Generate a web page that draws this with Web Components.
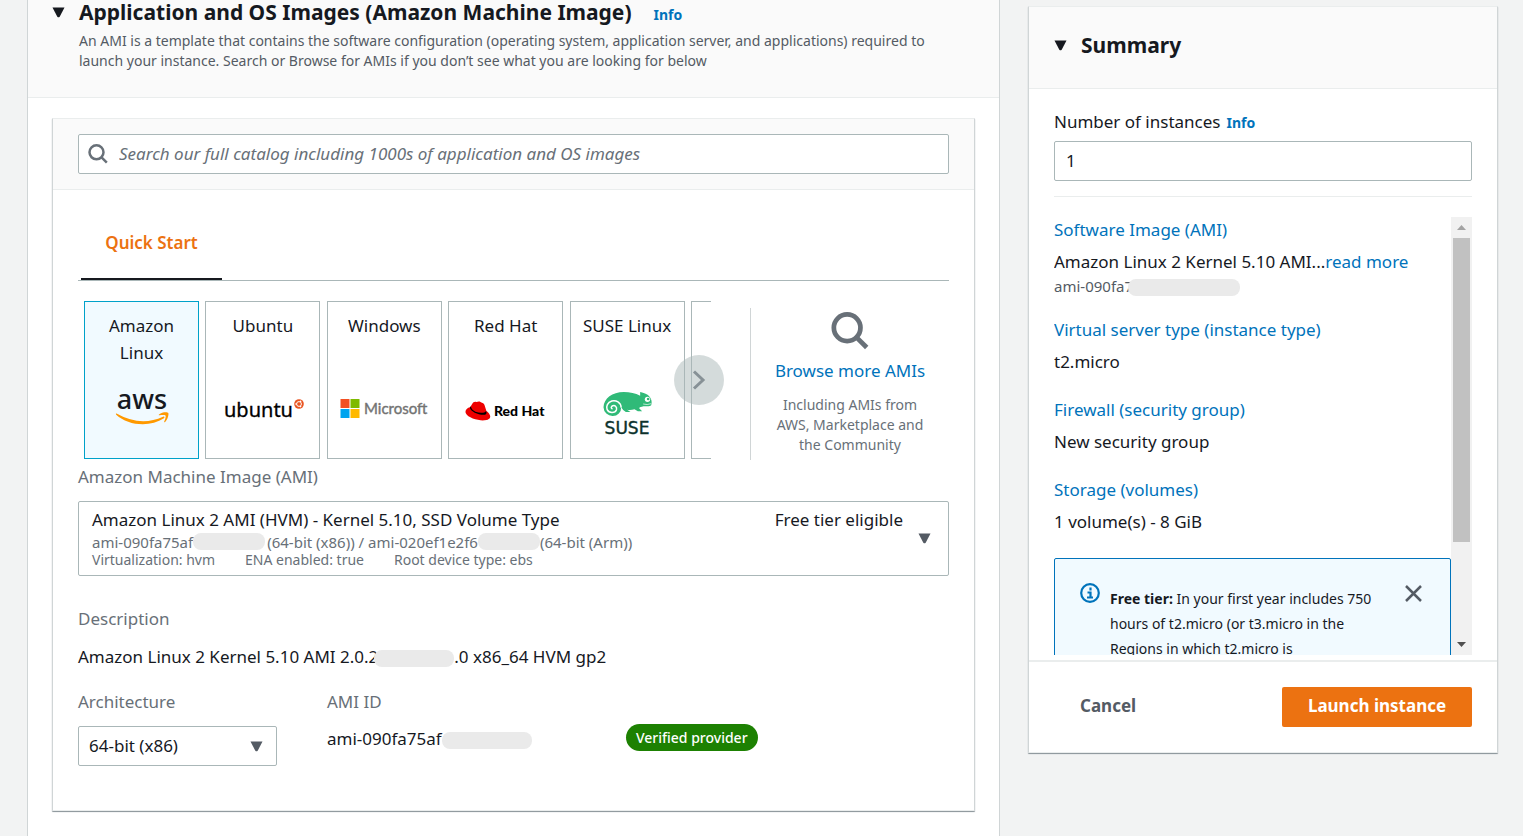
<!DOCTYPE html>
<html lang="en">
<head>
<meta charset="utf-8">
<meta name="viewport" content="width=device-width, initial-scale=1">
<title>Launch an instance</title>
<style>
  :root {
    --ink: #16191f;
    --muted: #545b64;
    --soft: #687078;
    --link: #0073bb;
    --accent: #ec7211;
    --edge: #aab7b8;
    --line: #eaeded;
    --small: 14px;
    --meta: 15px;
    --title: 21px;
  }
  body {
    margin: 0;
    background: #f2f3f3;
    color: var(--ink);
    font: 17px/24px "Noto Sans", "Open Sans", sans-serif;
    overflow: hidden;
  }
</style>
</head>
<body>
<launch-page></launch-page>

<script>
const base = `
  *, *::before, *::after { box-sizing: border-box; }
  :host { display: block; }
  :host([hidden]) { display: none; }
  h2, p { margin: 0; }
  a { color: var(--link); text-decoration: none; }
  button, input, select { font: inherit; color: inherit; margin: 0; }
  svg { display: block; }
`;

function define(name, css, html) {
  const template = document.createElement('template');
  template.innerHTML = `<style>${base}${css}</style>${html}`;
  customElements.define(name, class extends HTMLElement {
    constructor() {
      super();
      this.attachShadow({ mode: 'open' }).append(template.content.cloneNode(true));
    }
  });
}

define('caret-icon', `
  :host { display: block; flex: none; width: 13px; height: 11px; }
`, `<svg width="13" height="11" viewBox="0 0 13 11" aria-hidden="true"><path d="M.5.5h12L7.700 9.800q-1.200 1-2.400 0z" fill="currentColor"/></svg>`);

define('search-icon', `
  :host { display: block; flex: none; width: 20px; height: 20px; color: var(--soft); }
  svg { width: 100%; height: 100%; }
`, `<svg viewBox="0 0 20 20" fill="none" stroke="currentColor" stroke-width="2.500" aria-hidden="true"><circle cx="8.500" cy="8.300" r="7"/><path d="M13.300 13.200l5.500 5.500"/></svg>`);

define('info-link', `
  :host { display: block; font-size: var(--small); line-height: 20px; font-weight: 700; }
`, `<a href="#info">Info</a>`);

/* A grey pill that hides part of an identifier */
define('redacted-text', `
  :host { display: inline-block; width: 72px; height: 17px; border-radius: 8px; background: #eaeaea; vertical-align: -4px; position: relative; }
`, ``);

define('section-card', `
  :host { background: #fff; border: 1px solid var(--line); border-color: var(--line) #d0d5d6; box-shadow: 0 1px 1px 0 #879196; border-radius: 1px; }
  header { background: #fafafa; border-bottom: 1px solid var(--line); }
`, `<header><slot name="header"></slot></header><slot></slot>`);

define('section-title', `
  :host { display: flex; gap: 14px; align-items: baseline; }
  caret-icon { align-self: center; }
  h2 { font-size: var(--title); line-height: 24px; font-weight: 700; }
  ::slotted(info-link) { margin-left: 8px; }
`, `<caret-icon></caret-icon><h2><slot></slot></h2><slot name="info"></slot>`);

define('catalog-search', `
  :host { padding: 15px 25px; }
  .box { display: flex; align-items: center; gap: 11px; height: 40px; padding: 0 9px; background: #fff; border: 1px solid var(--edge); border-radius: 2px; }
  input { flex: 1; min-width: 0; border: 0; outline: 0; padding: 0; background: none; }
  input::placeholder { color: var(--soft); font-style: italic; opacity: 1; }
`, `<div class="box"><search-icon></search-icon><input type="search" aria-label="Search images" placeholder="Search our full catalog including 1000s of application and OS images"></div>`);

define('os-tile', `
  :host { flex: none; width: 115px; height: 158px; }
  button { display: flex; flex-direction: column; justify-content: space-between; align-items: center; width: 100%; height: 100%; padding: 10px 5px 18px; background: #fff; border: 1px solid var(--edge); line-height: 27px; }
  :host([selected]) button { background: #f1faff; border-color: #00a1c9; }
`, `<button type="button"><slot></slot><slot name="logo"></slot></button>`);

const logo = (label, art) => `<svg slot="logo" width="100" height="60" viewBox="0 0 100 60" role="img" aria-label="${label}">${art}</svg>`;

define('os-carousel', `
  :host { position: relative; flex: 1; min-width: 0; }
  .view { overflow: hidden; }
  .track { display: flex; justify-content: space-between; width: 722px; }
  .next { position: absolute; right: -13px; top: 54px; width: 50px; height: 50px; border: 0; border-radius: 50%; padding: 0; background: rgba(170,183,184,.5); display: grid; place-items: center; }
`, `
  <div class="view"><div class="track">
    <os-tile selected>Amazon Linux${logo('AWS', `
      <text x="50" y="29" text-anchor="middle" font-size="27" font-weight="500" fill="#16191f" font-family="Noto Sans">aws</text>
      <path d="M24.500 33.500q24 13.500 46.500 3.200c1.200-.5 2 .8 1 1.600-14 9.200-36 7.400-47.800-3.600-.6-.7-.3-1.500.3-1.200z" fill="#f90"/>
      <path d="M67 34.500c3-2.600 8.600-2.600 9.300-1.500.7 1.200-.6 6.800-3.200 9-.6.5-1.200.2-.9-.5.8-1.800 2-5 1.300-6-.6-.8-4-.5-6-.3-.8.1-.9-.4-.500-.7z" fill="#f90"/>`)}</os-tile>
    <os-tile>Ubuntu${logo('Ubuntu', `
      <text x="11" y="37" font-size="20" fill="#000" stroke="#000" stroke-width=".3" font-family="Noto Sans">ubuntu</text>
      <circle cx="86" cy="24" r="4.800" fill="#e95420"/><circle cx="86" cy="24" r="2.400" fill="none" stroke="#fff" stroke-width="1"/><circle cx="83" cy="24" r=".8" fill="#fff"/><circle cx="87.600" cy="21.400" r=".8" fill="#fff"/><circle cx="87.600" cy="26.600" r=".8" fill="#fff"/>`)}</os-tile>
    <os-tile>Windows${logo('Microsoft', `
      <path d="M6.500 19h9v9h-9z" fill="#f25022"/><path d="M16.500 19h9v9h-9z" fill="#7fba00"/><path d="M6.500 29h9v9h-9z" fill="#00a4ef"/><path d="M16.500 29h9v9h-9z" fill="#ffb900"/>
      <text x="30" y="34" font-size="15" fill="#737373" stroke="#737373" stroke-width=".4" font-family="Lato">Microsoft</text>`)}</os-tile>
    <os-tile>Red Hat${logo('Red Hat', `
      <g transform="translate(-130.500 -90) scale(.3333)"><path d="M434 352c-10 2-16 10-13 18 6 14 39 23 57 21 14-1 19-9 15-16-2-5-6-9-10-11l-6-19c-2-7-9-6-12-9-6-3-10 1-13 0-4-2-9 0-12 6z" fill="#e00"/><path d="M433 353c3 12 27 23 45 21 6-1 6-6 4-11-4 7-20 7-32 2-9-4-12-8-14-16z" fill="#000"/></g>
      <text x="38" y="36" font-size="14" font-weight="900" fill="#000" font-family="Lato">Red Hat</text>`)}</os-tile>
    <os-tile>SUSE Linux${logo('SUSE', `
      <g transform="translate(-16.500 -90) scale(.3333)"><path d="M129 352C130 325 155 306 190 306C208 306 225 310 239 317L239 306C250 309 262 312 268 321C275 331 274 340 272 346C266 352 256 347 244 350Q236 351 236 355L245 364H232L222 358Q210 361 200 359L210 366H196Q187 361 182 352A25 25 0 0 1 157 378A27 27 0 0 1 129 352Z" fill="#30ba78"/><path d="M182 353C181 337 167 330 154 333C141 337 136 349 140 359C146 371 164 370 168 359C170 350 163 344 155 348Q149 354 156 357" fill="none" stroke="#fff" stroke-width="4.500"/><circle cx="261" cy="328" r="8" fill="#fff"/><circle cx="263" cy="327" r="4" fill="#30ba78"/><path d="M248 342q12 4 24-1" stroke="#fff" stroke-width="2" fill="none"/></g>
      <text x="50" y="54" text-anchor="middle" font-size="17" fill="#0c322c" stroke="#0c322c" stroke-width=".4" font-family="DejaVu Sans">SUSE</text>`)}</os-tile>
    <os-tile></os-tile>
  </div></div>
  <button class="next" type="button" aria-label="Next images"><svg width="14" height="20" viewBox="0 0 14 20" fill="none" stroke="#879196" stroke-width="3" aria-hidden="true"><path d="M2 1.500L11 10l-9 8.500"/></svg></button>
`);

define('browse-more', `
  :host { width: 199px; height: 152px; border-left: 1px solid #d0d5d6; text-align: center; display: flex; flex-direction: column; align-items: center; }
  search-icon { width: 38px; height: 38px; margin: 4px 0 9px; }
  p { width: 160px; margin-top: 12px; color: var(--soft); font-size: var(--small); line-height: 20px; }
`, `<search-icon></search-icon><a href="#catalog">Browse more AMIs</a><p>Including AMIs from AWS, Marketplace and the Community</p>`);

define('quick-start', `
  nav { border-bottom: 1px solid var(--edge); padding: 0 3px; display: flex; }
  button { width: 141px; height: 73px; padding: 0; border: 0; border-bottom: 2px solid var(--ink); background: none; color: var(--accent); font-weight: 600; }
  .images { display: flex; align-items: flex-start; padding: 20px 0 0 6px; }
  browse-more { margin: 7px 0 0 39px; }
`, `
  <nav role="tablist"><button type="button" role="tab" aria-selected="true">Quick Start</button></nav>
  <div class="images"><os-carousel></os-carousel><browse-more></browse-more></div>
`);

define('ami-picker', `
  .label { color: var(--soft); }
  button { display: flex; align-items: center; width: 100%; height: 75px; margin-top: 12px; padding: 0 17px 0 13px; text-align: left; background: #fff; border: 1px solid var(--edge); border-radius: 2px; }
  .main { flex: 1; }
  .top { display: flex; justify-content: space-between; padding: 0 15px 2px 0; line-height: 22px; }
  .meta { display: flex; color: var(--soft); font-size: var(--meta); line-height: 18px; white-space: pre; }
  .facts { gap: 30px; font-size: var(--small); }
  caret-icon { color: var(--muted); }
  .a { width: 72px; margin-right: 2px; }
  .b { width: 62px; }
`, `
  <div class="label" id="ami-label">Amazon Machine Image (AMI)</div>
  <button type="button" aria-haspopup="listbox" aria-labelledby="ami-label">
    <span class="main">
      <span class="top"><span>Amazon Linux 2 AMI (HVM) - Kernel 5.10, SSD Volume Type</span><span>Free tier eligible</span></span>
      <span class="meta"><span>ami-090fa75af</span><redacted-text class="a"></redacted-text><span>(64-bit (x86)) / ami-020ef1e2f6</span><redacted-text class="b"></redacted-text><span>(64-bit (Arm))</span></span>
      <span class="meta facts"><span>Virtualization: hvm</span><span>ENA enabled: true</span><span>Root device type: ebs</span></span>
    </span>
    <caret-icon></caret-icon>
  </button>
`);

define('ami-details', `
  .label { display: block; color: var(--soft); }
  .value { margin-top: 14px; }
  .row { display: grid; grid-template-columns: 199px 249px 1fr; column-gap: 50px; margin-top: 21px; align-items: start; }
  .select { position: relative; display: block; margin-top: 12px; }
  select { appearance: none; width: 100%; height: 40px; padding: 0 10px; background: #fff; border: 1px solid var(--edge); border-radius: 2px; }
  caret-icon { position: absolute; right: 14px; top: 15px; color: var(--muted); pointer-events: none; }
  .id { margin-top: 13px; white-space: nowrap; }
  .badge { justify-self: start; margin-top: 34px; padding: 0 10px; border-radius: 14px; background: #1d8102; color: #fff; font-size: var(--small); line-height: 27px; font-weight: 500; }
  .v { width: 80px; margin-left: -4px; }
  .w { width: 90px; }
`, `
  <span class="label">Description</span>
  <p class="value">Amazon Linux 2 Kernel 5.10 AMI 2.0.2<redacted-text class="v"></redacted-text>.0 x86_64 HVM gp2</p>
  <div class="row">
    <div>
      <label class="label" for="arch">Architecture</label>
      <span class="select"><select id="arch"><option>64-bit (x86)</option><option>64-bit (Arm)</option></select><caret-icon></caret-icon></span>
    </div>
    <div>
      <span class="label">AMI ID</span>
      <p class="id">ami-090fa75af<redacted-text class="w"></redacted-text></p>
    </div>
    <span class="badge">Verified provider</span>
  </div>
`);

define('image-section', `
  section { background: #fff; border: solid #d0d5d6; border-width: 0 1px; min-height: 100vh; }
  .head { background: #fafafa; border-bottom: 1px solid var(--line); padding: 0 24px 26px; }
  .intro { padding: 6px 0 0 27px; color: var(--muted); font-size: var(--small); line-height: 20px; max-width: 910px; }
  .body { padding: 20px 24px 24px; }
  .content { padding: 17px 25px 44px; }
  ami-picker { margin-top: 5px; }
  ami-details { margin-top: 31px; }
`, `
  <section>
    <div class="head">
      <section-title>Application and OS Images (Amazon Machine Image)<info-link slot="info"></info-link></section-title>
      <p class="intro">An AMI is a template that contains the software configuration (operating system, application server, and applications) required to launch your instance. Search or Browse for AMIs if you don’t see what you are looking for below</p>
    </div>
    <div class="body">
      <section-card>
        <catalog-search slot="header"></catalog-search>
        <div class="content">
          <quick-start></quick-start>
          <ami-picker></ami-picker>
          <ami-details></ami-details>
        </div>
      </section-card>
    </div>
  </section>
`);

define('summary-item', `
  :host { padding-bottom: 24px; }
  div { margin-top: 8px; }
`, `<a href="#edit"><slot name="name"></slot></a><div><slot></slot></div><slot name="note"></slot>`);

define('free-tier-alert', `
  :host { display: flex; gap: 10px; padding: 24px 28px 24px 25px; background: #f1faff; border: 1px solid var(--link); border-radius: 2px; }
  p { flex: 1; padding-top: 3px; font-size: var(--small); line-height: 25px; }
  b { font-weight: 700; }
  button { flex: none; align-self: flex-start; margin-top: 2px; padding: 0; border: 0; background: none; }
  svg { flex: none; }
`, `
  <svg width="20" height="20" viewBox="0 0 20 20" fill="none" stroke="#0073bb" aria-hidden="true"><circle cx="10" cy="10" r="8.800" stroke-width="2.200"/><path d="M10.500 4.500v3M7.500 9.500h3v5M7 14.500h6" stroke-width="2.200"/></svg>
  <p><b>Free tier:</b> In your first year includes 750 hours of t2.micro (or t3.micro in the Regions in which t2.micro is</p>
  <button type="button" aria-label="Dismiss"><svg width="17" height="17" viewBox="0 0 17 17" stroke="#545b64" stroke-width="2.500"><path d="M1 1l15 15M16 1L1 16"/></svg></button>
`);

define('scroll-rail', `
  :host { flex: none; width: 21px; padding: 0 2px; background: #f1f1f1; display: flex; flex-direction: column; }
  span { display: grid; place-items: center; height: 21px; }
  .thumb { height: 304px; background: #c1c1c1; }
  .down { margin-top: auto; }
`, `<span><svg width="9" height="5"><path d="M0 5l4.500-5L9 5z" fill="#a3a3a3"/></svg></span><div class="thumb"></div><span class="down"><svg width="9" height="5"><path d="M0 0h9L4.500 5z" fill="#505050"/></svg></span>`);

define('summary-panel', `
  section-title { padding: 26px 25px 31px; }
  .count { padding: 21px 25px 0; }
  .label { display: flex; gap: 6px; align-items: baseline; }
  input { display: block; width: 100%; height: 40px; margin-top: 7px; padding: 0 11px 2px; border: 1px solid var(--edge); border-radius: 2px; background: #fff; }
  .scroll { display: flex; margin: 15px 25px 5px; padding-top: 20px; border-top: 1px solid var(--line); }
  .list { flex: 1; height: 438px; padding-top: 1px; overflow: hidden; }
  .note { color: var(--muted); font-size: var(--meta); line-height: 20px; padding-top: 2px; height: 20px; display: block; }
  redacted-text { width: 112px; margin-left: -5px; }
  .actions { display: flex; justify-content: space-between; align-items: center; padding: 25px; border-top: 2px solid var(--line); }
  .actions button { height: 40px; border: 0; border-radius: 2px; padding: 0 26px 2px; background: none; color: var(--muted); font-weight: 700; }
  .actions .go { width: 190px; padding: 0 0 2px; background: var(--accent); color: #fff; }
`, `
  <section-card>
    <section-title slot="header">Summary</section-title>
    <div class="count">
      <div class="label"><label for="count">Number of instances</label><info-link></info-link></div>
      <input id="count" type="text" inputmode="numeric" value="1">
    </div>
    <div class="scroll">
      <div class="list">
        <summary-item><span slot="name">Software Image (AMI)</span>Amazon Linux 2 Kernel 5.10 AMI...<a href="#more">read more</a><span class="note" slot="note">ami-090fa7<redacted-text></redacted-text></span></summary-item>
        <summary-item><span slot="name">Virtual server type (instance type)</span>t2.micro</summary-item>
        <summary-item><span slot="name">Firewall (security group)</span>New security group</summary-item>
        <summary-item><span slot="name">Storage (volumes)</span>1 volume(s) - 8 GiB</summary-item>
        <free-tier-alert></free-tier-alert>
      </div>
      <scroll-rail></scroll-rail>
    </div>
    <div class="actions"><button type="button">Cancel</button><button class="go" type="button">Launch instance</button></div>
  </section-card>
`);

define('launch-page', `
  :host { display: grid; grid-template-columns: minmax(0, 1fr) 470px; gap: 28px; align-items: start; padding: 0 25px 0 27px; }
  summary-panel { margin-top: 6px; }
`, `<image-section></image-section><summary-panel></summary-panel>`);
</script>
</body>
</html>
